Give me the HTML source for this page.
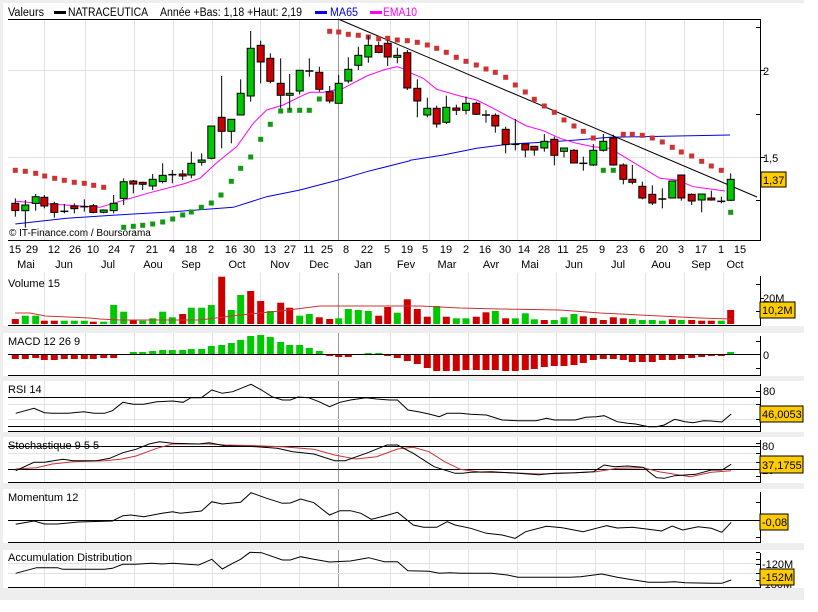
<!DOCTYPE html>
<html><head><meta charset="utf-8"><style>
html,body{margin:0;padding:0;background:#fff;width:818px;height:612px;overflow:hidden}
svg{display:block;font-family:"Liberation Sans",sans-serif}
</style></head><body>
<svg id="s" width="818" height="612" xmlns="http://www.w3.org/2000/svg"></svg>
<script>
var o='';
function R(x,y,w,h,f,s){o+='<rect x="'+x+'" y="'+y+'" width="'+w+'" height="'+h+'" fill="'+f+'"'+(s?' stroke="'+s+'" stroke-width="1"':'')+'/>';}
function L(x1,y1,x2,y2,c,w){o+='<line x1="'+x1+'" y1="'+y1+'" x2="'+x2+'" y2="'+y2+'" stroke="'+c+'" stroke-width="'+(w||1)+'"/>';}
function T(x,y,t,sz,c,a,tl){o+='<text x="'+x+'" y="'+y+'" font-size="'+(sz||11)+'" fill="'+(c||'#000')+'"'+(a?' text-anchor="'+a+'"':'')+(tl?' textLength="'+tl+'" lengthAdjust="spacingAndGlyphs"':'')+'>'+t+'</text>';}
function P(pts,c,w){o+='<polyline fill="none" stroke="'+c+'" stroke-width="'+(w||1)+'" points="'+pts.map(function(p){return p[0].toFixed(1)+','+p[1].toFixed(1)}).join(' ')+'"/>';}
R(0,0,804,600,'#eeeeee');
R(3,3,801,270,'#fff');
var panels=[[273,53],[333,43],[381,51],[437,46],[489,54],[550,38]];
panels.forEach(function(p){R(3,p[0],801,p[1],'#fff');});
var vg=[44,85,134,173,212,260,299,390,429,468,517,556,595,645,684,723];
vg.forEach(function(x){L(x+.5,20,x+.5,240,'#e2e2e2');});
L(8,70.5,760,70.5,'#e2e2e2');L(8,157.5,760,157.5,'#e2e2e2');
panels.forEach(function(p){vg.forEach(function(x){L(x+.5,p[0],x+.5,p[0]+p[1]-1,'#e2e2e2');});L(338.5,p[0],338.5,p[0]+p[1]-1,'#999');});
L(338.5,20,338.5,240,'#999');
L(8,19.5,760,19.5,'#000');
T(8,16,'Valeurs',11.5,0,0,36);R(54,11,12,3,'#000');T(68,16,'NATRACEUTICA',11.5,0,0,80);
T(160,16,'Année +Bas: 1,18 +Haut: 2,19',11.5,0,0,142);
R(315,11,12,3,'#0000ee');T(330,16,'MA65',11.5,'#0000ee',0,28);
R(370,11,12,3,'#ff00ff');T(383,16,'EMA10',11.5,'#ff00ff',0,34);
L(760.5,19,760.5,240,'#000');L(8,240.5,761,240.5,'#000');
[27,114,200].forEach(function(y){L(756,y+.5,760,y+.5,'#000');});
L(760,70.5,765,70.5,'#000');L(760,157.5,765,157.5,'#000');
T(763,75,'2',11);T(763,162,'1,5',11);
var c1=[[46,610,632,595,650,'r'],[76,615,632,600,683,'g'],[107,590,610,582,632,'g'],[133,592,618,585,625,'r'],[163,611,637,605,653,'r'],[193,631,633,612,640,'d'],[223,618,626,610,640,'r'],[253,617,619,598,635,'d'],[280,617,637,612,640,'r'],[311,630,637,628,640,'g'],[341,610,632,585,640,'g'],[371,545,595,535,615,'g'],[400,543,552,540,580,'r'],[428,547,553,545,570,'r'],[458,538,558,522,570,'g'],[488,526,545,490,550,'g'],[517,521,523,510,550,'d'],[548,522,526,510,540,'r'],[574,490,525,455,535,'g'],[605,480,487,460,497,'g'],[634,378,475,378,478,'g'],[665,352,394,228,445,'r'],[694,358,394,358,430,'g'],[722,280,345,238,345,'g'],[752,145,288,93,305,'g'],[782,136,186,122,250,'r'],[811,175,244,160,250,'r'],[842,250,286,175,325,'r'],[869,280,286,222,330,'g'],[899,211,273,211,283,'g'],[928,210,212,175,230,'d'],[958,217,268,200,275,'r'],[989,275,303,258,310,'r'],[1016,250,310,225,310,'g'],[1045,208,243,172,250,'g'],[1075,166,196,140,210,'g'],[1105,136,171,106,188,'g'],[1136,137,157,125,160,'r'],[1163,130,171,120,198,'r'],[1192,166,171,143,190,'g'],[1222,158,264,150,270,'r']];
var c2=[[22,265,303,238,352,'r'],[52,325,345,293,352,'g'],[80,325,372,317,383,'r'],[109,322,367,287,372,'g'],[139,324,331,314,345,'r'],[168,310,331,290,343,'g'],[199,310,343,305,345,'r'],[228,342,344,330,368,'d'],[256,346,378,340,398,'r'],[287,388,434,380,460,'r'],[316,430,432,357,451,'d'],[346,432,450,432,472,'r'],[373,439,450,439,467,'r'],[403,424,444,402,455,'g'],[433,418,466,410,496,'r'],[462,444,454,444,472,'g'],[492,451,489,447,490,'r'],[520,487,489,470,512,'d'],[550,451,495,432,498,'g'],[580,424,451,402,455,'g'],[610,414,495,404,497,'r'],[640,495,538,490,553,'r'],[667,538,547,495,553,'r'],[697,559,594,545,598,'r'],[727,583,609,556,615,'r'],[757,594,596,565,625,'d'],[787,543,594,543,594,'g'],[814,525,594,525,602,'r'],[845,583,603,580,615,'r'],[875,582,600,582,637,'g'],[904,594,600,572,602,'r'],[934,601,603,590,610,'d'],[962,538,601,520,603,'g']];
var C=[];c1.forEach(function(c){C.push([c[0]/3,c[1]/3,c[2]/3,c[3]/3,c[4]/3,c[5]]);});
c2.forEach(function(c){C.push([c[0]/3+410,c[1]/3,c[2]/3,c[3]/3,c[4]/3,c[5]]);});
function Z(a,dx){return a.map(function(p){return [p[0]/3+dx,p[1]/3];});}
P(Z([[46,672],[200,655],[350,645],[520,635],[700,622],[800,590],[900,570],[1015,540],[1100,515],[1230,482]],0).concat(Z([[0,481],[100,465],[200,445],[300,432],[400,427],[500,420],[600,412],[800,408],[960,405]],410)),'#0000ee');
P(Z([[46,604],[150,612],[300,622],[380,598],[450,578],[550,552],[600,535],[650,488],[710,440],[760,370],[800,330],[850,315],[900,290],[930,277],[970,277],[1030,265],[1100,228],[1150,210],[1190,200],[1230,212]],0).concat(Z([[0,218],[40,235],[80,268],[150,288],[200,300],[250,325],[300,352],[350,378],[400,392],[450,415],[500,430],[550,440],[600,445],[650,475],[700,505],[750,535],[800,540],[850,560],[900,567],[945,573]],410)),'#ff00ff');
L(338,19,757,197,'#000');
var sr1=[[46,511],[76,514],[107,520],[134,528],[164,535],[193,541],[223,547],[253,550],[281,556],[311,562],[989,94],[1016,96],[1045,103],[1075,106],[1105,111],[1136,116],[1163,115],[1192,120],[1222,122]];
var sg1=[[371,682],[400,679],[428,676],[458,672],[488,666],[518,657],[548,645],[574,636],[604,622],[634,609],[663,585],[694,544],[722,505],[752,471],[782,418],[811,373],[842,333],[869,331],[899,331],[928,331],[958,297]];
var sr2=[[22,127],[52,135],[80,145],[109,157],[139,172],[168,184],[199,195],[228,207],[256,217],[287,232],[316,255],[346,276],[373,298],[403,318],[433,337],[462,360],[492,378],[520,394],[550,414],[640,403],[667,403],[697,406],[727,414],[757,426],[787,442],[814,456],[845,468],[875,484],[904,498],[934,511]];
var sg2=[[580,511],[610,511],[962,637]];
function dots(a,dx,c){a.forEach(function(p){R((p[0]/3+dx-2.5).toFixed(1),(p[1]/3-2.5).toFixed(1),5,5,c);});}
dots(sr1,0,'#cc3333');dots(sr2,410,'#cc3333');dots(sg1,0,'#119911');dots(sg2,410,'#119911');
C.forEach(function(c){var x=c[0];L(x,c[3],x,c[4],'#000');
 if(c[5]=='d'){L(x-4,c[1]+1,x+4,c[1]+1,'#000',1.5);}
 else{var h=Math.max(c[2]-c[1],2);R((x-3.5).toFixed(1),c[1].toFixed(1),7,h.toFixed(1),c[5]=='g'?'#00c800':'#cc0000','#000');}});
T(9,236,'© IT-Finance.com / Boursorama',10);
R(761,172,25,15,'#ffcc00','#000');T(763,184,'1,37',11);
var dx=[15,32,54,75,93,114,132,152,172,191,211,231,249,270,290,309,327,346,367,387,407,425,446,466,485,505,524,544,563,582,602,622,642,662,681,701,721,740];
var dl='15 29 12 26 10 24 7 21 4 18 2 16 30 13 27 11 25 8 22 5 19 5 19 2 16 30 14 28 11 25 9 23 6 20 3 17 1 15'.split(' ');
dx.forEach(function(x,i){T(x,253,dl[i],11,'#000','middle');});
var mx=[26,64,108,153,191,237,280,319,363,406,447,491,530,574,618,661,701,735];
var ml='Mai Jun Jul Aou Sep Oct Nov Dec Jan Fev Mar Avr Mai Jun Jul Aou Sep Oct'.split(' ');
mx.forEach(function(x,i){T(x,268,ml[i],11,'#000','middle');});
panels.forEach(function(p){var b=p[0]+p[1]-1;L(8,b+.5,761,b+.5,'#000');L(760.5,p[0]+3,760.5,b,'#000');});
var xs=C.map(function(c){return c[0];});
var vt=[147,137,137,152,152,152,152,152,155,155,105,125,150,152,145,125,142,132,113,113,105,20,120,75,63,93,123,98,113,137,132,142,147,145,117,120,123,137,111,128,88,117,140,108,140,145,145,140,127,123,145,145,130,148,150,150,142,132,139,144,150,142,145,147,150,150,152,148,150,150,152,152,152,120];
var vc='rggrrgggrgggrggggrgggrggrrgrrggrrggggrrgrrrgrggrrgrgggrgggrrrrrggggrgrrrg';
xs.forEach(function(x,i){var t=vt[i]/3+270;R((x-3.5).toFixed(1),t.toFixed(1),7,(324-t).toFixed(1),vc[i]=='g'?'#00c800':'#cc0000');});
P([[15,313],[30,313],[45,316],[90,318],[100,319],[120,320],[200,320],[240,315],[280,311],[320,306],[420,306],[460,308],[500,309],[560,310],[600,313],[700,318],[731,319]],'#cc3333');
T(8,287,'Volume 15',11);
[284,311].forEach(function(y){L(756,y+.5,760,y+.5,'#000');});L(760,298.5,764,298.5,'#000');
T(763,302,'20M',11);
R(760,302,35,16,'#ffcc00','#000');T(762,314,'10,2M',11);
L(8,354.5,760,354.5,'#000');
var md=[-4,-4,-3,-5,-5,-4,-4,-4,-4,-3,-3,0,2,2,3,4,4,4,5,5,8,9,11,14,18,19,17,12,9,9,6,3,-1,-2,-2,0,1,1,-1,-3,-6,-9,-13,-16,-16,-16,-15,-15,-15,-15,-16,-16,-15,-14,-12,-11,-11,-10,-8,-5,-4,-4,-5,-7,-7,-7,-5,-5,-4,-3,-2,-1,-1,2];
xs.forEach(function(x,i){var v=md[i]||0;if(!v)return;R((x-3.5).toFixed(1),v>0?354-v:355,7,Math.abs(v),v>0?'#00c800':'#cc0000');});
T(8,345,'MACD 12 26 9',11);
[341,368].forEach(function(y){L(756,y+.5,760,y+.5,'#000');});T(763,359,'0',11);
function Q(a,dy){return a.map(function(p){return [p[0]/1.912,p[1]/3+dy];});}
L(8,397.5,760,397.5,'#000');L(8,426.5,760,426.5,'#000');L(8,404.5,760,404.5,'#e2e2e2');L(8,419.5,760,419.5,'#e2e2e2');
P(Q([[30,430],[65,415],[85,428],[100,430],[130,430],[160,425],[180,430],[200,430],[215,422],[235,397],[255,403],[275,403],[300,395],[330,393],[350,397],[365,383],[385,383],[405,360],[425,370],[445,365],[480,343],[500,360],[520,380],[540,390],[555,390],[570,381],[590,383],[610,395],[630,410],[650,397],[670,390],[700,383],[720,387],[745,390],[760,390],[780,420],[800,425],[820,432],[840,440],[855,430],[880,430],[900,433],[930,435],[960,450],[990,452],[1025,452],[1045,445],[1060,450],[1080,450],[1100,450],[1120,442],[1140,440],[1155,437],[1180,455],[1200,460],[1215,462],[1240,470],[1255,470],[1270,465],[1290,448],[1310,455],[1325,458],[1345,452],[1360,453],[1380,456],[1398,432]],270),'#000');
T(8,393,'RSI 14',11);
[391,404,419].forEach(function(y){L(756,y+.5,760,y+.5,'#000');});T(763,395,'80',11);
R(760,406,43,16,'#ffcc00','#000');T(762,418,'46,0053',11);
L(8,446.5,760,446.5,'#000');L(8,469.5,760,469.5,'#000');L(8,453.5,760,453.5,'#e2e2e2');L(8,462.5,760,462.5,'#e2e2e2');
P(Q([[30,117],[70,113],[100,102],[140,95],[200,92],[230,88],[260,78],[300,55],[330,42],[400,42],[430,45],[490,47],[540,50],[600,58],[640,75],[680,87],[720,80],[760,57],[790,52],[820,65],[850,95],[880,118],[920,127],[980,128],[1030,132],[1080,130],[1140,125],[1180,115],[1230,113],[1260,125],[1290,133],[1320,140],[1360,127],[1398,122]],430),'#cc3333');
P(Q([[30,122],[65,97],[85,97],[120,88],[140,92],[185,92],[210,85],[235,68],[260,58],[285,42],[305,35],[330,40],[380,42],[400,38],[430,47],[490,50],[530,55],[560,65],[600,72],[640,92],[660,92],[700,70],[740,45],[760,45],[790,70],[830,110],[870,130],[885,130],[900,127],[940,125],[990,130],[1030,134],[1060,130],[1100,128],[1135,125],[1155,105],[1175,110],[1200,108],[1230,112],[1255,143],[1270,145],[1290,137],[1330,133],[1360,120],[1380,120],[1398,103]],430),'#000');
T(8,449,'Stochastique 9 5 5',11);
[443,453,462,476].forEach(function(y){L(756,y+.5,760,y+.5,'#000');});T(762,450,'80',11);T(762,474,'20',11);
R(760,456,43,17,'#ffcc00','#000');T(762,469,'37,1755',11);
L(8,520.5,760,520.5,'#000');
P(Q([[30,283],[65,273],[85,282],[110,282],[150,276],[215,273],[235,257],[250,255],[275,260],[310,250],[330,245],[345,250],[385,243],[405,215],[425,222],[460,217],[480,188],[510,205],[540,220],[555,219],[575,207],[600,218],[630,255],[650,242],[670,242],[690,250],[710,268],[735,258],[760,247],[790,285],[810,292],[835,292],[855,275],[870,285],[900,295],[930,310],[960,315],[985,325],[1005,305],[1045,289],[1075,293],[1115,305],[1140,295],[1160,287],[1180,294],[1210,292],[1240,298],[1265,303],[1285,288],[1305,300],[1335,290],[1360,295],[1380,307],[1398,277]],430),'#000');
T(8,501,'Momentum 12',11);
[502,537].forEach(function(y){L(756,y+.5,760,y+.5,'#000');});
R(760,514,28,16,'#ffcc00','#000');T(762,526,'-0,08',11);
L(8,563.5,760,563.5,'#e2e2e2');L(8,573.5,760,573.5,'#e2e2e2');
P(Q([[30,430],[70,413],[110,413],[120,418],[200,418],[215,415],[235,403],[260,403],[290,400],[310,402],[330,400],[380,405],[405,388],[425,417],[445,400],[460,388],[478,367],[500,368],[540,390],[555,390],[575,380],[600,388],[630,396],[670,393],[705,383],[735,395],[760,395],[780,422],[820,424],[840,430],[860,428],[880,430],[940,430],[970,435],[990,442],[1090,442],[1110,440],[1150,432],[1160,435],[1180,442],[1200,447],[1240,457],[1270,457],[1290,455],[1310,458],[1360,460],[1380,460],[1398,450]],430),'#000');
T(8,561,'Accumulation Distribution',11);
[552,559,564,573,580].forEach(function(y){L(756,y+.5,760,y+.5,'#000');});
T(761,588,'-180M',11);T(762,568,'-120M',11);
R(760,569,34,16,'#ffcc00','#000');T(762,581,'-152M',11);
document.getElementById('s').innerHTML=o;
</script>
</body></html>
